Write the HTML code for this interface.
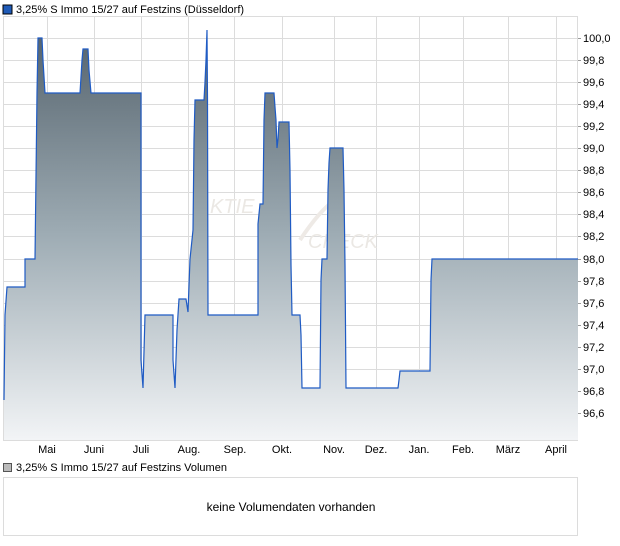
<!DOCTYPE html>
<html><head><meta charset="utf-8"><style>
body{margin:0;width:620px;height:546px;background:#fff;font-family:"Liberation Sans",sans-serif;overflow:hidden;position:relative}
</style></head><body>
<svg width="620" height="546" style="position:absolute;left:0;top:0" font-family="Liberation Sans, sans-serif" font-size="11">
<defs><linearGradient id="g" gradientUnits="userSpaceOnUse" x1="0" y1="30" x2="0" y2="440">
<stop offset="0" stop-color="#54626c"/><stop offset="0.5" stop-color="#9eacb4"/><stop offset="1" stop-color="#f2f4f6"/></linearGradient></defs>
<rect x="3" y="5" width="9" height="9" fill="#1f5bb8" stroke="#000" stroke-width="1"/>
<text x="16" y="13">3,25% S Immo 15/27 auf Festzins (Düsseldorf)</text>
<g stroke="#dcdcdc" stroke-width="1">
<rect x="3.5" y="16.5" width="574" height="424" fill="none"/>
<path d="M47.5 17V441M94.5 17V441M141.5 17V441M188.5 17V441M234.5 17V441M282.5 17V441M334.5 17V441M376.5 17V441M419.5 17V441M463.5 17V441M508.5 17V441M556.5 17V441"/>
<path d="M4 38.5H578M4 60.5H578M4 82.5H578M4 104.5H578M4 126.5H578M4 148.5H578M4 170.5H578M4 192.5H578M4 214.5H578M4 236.5H578M4 259.5H578M4 281.5H578M4 303.5H578M4 325.5H578M4 347.5H578M4 369.5H578M4 391.5H578M4 413.5H578"/>
</g>
<text x="210" y="213" font-size="20" font-style="italic" fill="#ebe8e4">KTIE</text>
<text x="308" y="248" font-size="20" font-style="italic" fill="#ebe8e4">CHECK</text>
<path d="M300 240 Q320 210 335 200" stroke="#eeeae6" stroke-width="4" fill="none"/>
<path d="M4 440 V400 L5 315 L7 287 L25 287 V259 L35 259 L37 93 L38 38 L42 38 L43 60 L45 93 L80 93 L82 60 L83 49 L88 49 L89 70 L91 93 L141 93 V360 L143 388 L145 315 L173 315 V360 L175 388 L177 330 L179 299 L186 299 L188 312 L190 259 L193 230 L194 140 L195 100 L204 100 L205 82 L206 60 L207 30 L207.5 100 L208 315 L258 315 L258 224 L260 204 L263 204 L264 120 L265 93 L274 93 L275 107 L276 120 L277 148 L278 139 L279 122 L289 122 L290 170 L291 265 L292 315 L300 315 L301 335 L302 388 L320 388 L321 280 L322 259 L327 259 L328 190 L329 163 L330 148 L343 148 L344 190 L345 265 L346 388 L398 388 L399 380 L400 371 L430 371 L431 280 L432 259 L578 259 V440 Z" fill="url(#g)"/>
<path d="M4 400 L5 315 L7 287 L25 287 V259 L35 259 L37 93 L38 38 L42 38 L43 60 L45 93 L80 93 L82 60 L83 49 L88 49 L89 70 L91 93 L141 93 V360 L143 388 L145 315 L173 315 V360 L175 388 L177 330 L179 299 L186 299 L188 312 L190 259 L193 230 L194 140 L195 100 L204 100 L205 82 L206 60 L207 30 L207.5 100 L208 315 L258 315 L258 224 L260 204 L263 204 L264 120 L265 93 L274 93 L275 107 L276 120 L277 148 L278 139 L279 122 L289 122 L290 170 L291 265 L292 315 L300 315 L301 335 L302 388 L320 388 L321 280 L322 259 L327 259 L328 190 L329 163 L330 148 L343 148 L344 190 L345 265 L346 388 L398 388 L399 380 L400 371 L430 371 L431 280 L432 259 L578 259" fill="none" stroke="#1f5bc4" stroke-width="1.2"/>
<g stroke="#999"><path d="M578 38.5h3M578 60.5h3M578 82.5h3M578 104.5h3M578 126.5h3M578 148.5h3M578 170.5h3M578 192.5h3M578 214.5h3M578 236.5h3M578 259.5h3M578 281.5h3M578 303.5h3M578 325.5h3M578 347.5h3M578 369.5h3M578 391.5h3M578 413.5h3"/></g>
<g>
<text x="583" y="42">100,0</text><text x="583" y="64">99,8</text><text x="583" y="86">99,6</text><text x="583" y="108">99,4</text><text x="583" y="130">99,2</text><text x="583" y="152">99,0</text><text x="583" y="174">98,8</text><text x="583" y="196">98,6</text><text x="583" y="218">98,4</text><text x="583" y="240">98,2</text><text x="583" y="263">98,0</text><text x="583" y="285">97,8</text><text x="583" y="307">97,6</text><text x="583" y="329">97,4</text><text x="583" y="351">97,2</text><text x="583" y="373">97,0</text><text x="583" y="395">96,8</text><text x="583" y="417">96,6</text>
</g>
<g text-anchor="middle">
<text x="47" y="453">Mai</text><text x="94" y="453">Juni</text><text x="141" y="453">Juli</text><text x="189" y="453">Aug.</text><text x="235" y="453">Sep.</text><text x="282" y="453">Okt.</text><text x="334" y="453">Nov.</text><text x="376" y="453">Dez.</text><text x="419" y="453">Jan.</text><text x="463" y="453">Feb.</text><text x="508" y="453">März</text><text x="556" y="453">April</text>
</g>
<rect x="3.5" y="463.5" width="8" height="8" fill="#bbb" stroke="#555"/>
<text x="16" y="471">3,25% S Immo 15/27 auf Festzins Volumen</text>
<rect x="3.5" y="477.5" width="574" height="58" fill="#fff" stroke="#dcdcdc"/>
<text x="291" y="511" font-size="12" text-anchor="middle">keine Volumendaten vorhanden</text>
</svg>
</body></html>
